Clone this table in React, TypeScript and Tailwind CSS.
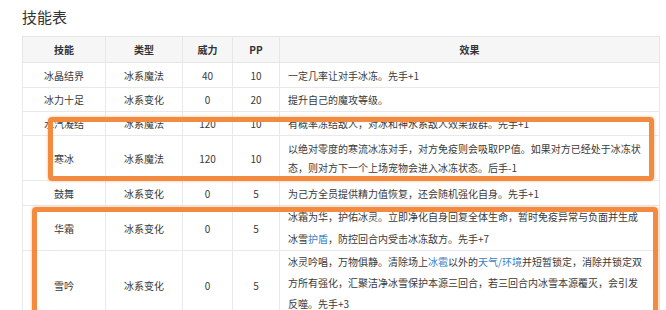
import React from 'react'

type Row = {
  name: string
  type: string
  power: string
  pp: string
  h: number
  lead?: string
  effect: React.ReactNode[]
}

const Link = ({ children }: { children: React.ReactNode }) => (
  <span className="text-[#3b7fc4]">{children}</span>
)

const rows: Row[] = [
  { name: '冰晶结界', type: '冰系魔法', power: '40', pp: '10', h: 25, effect: ['一定几率让对手冰冻。先手+1'] },
  { name: '冰力十足', type: '冰系变化', power: '0', pp: '20', h: 24, effect: ['提升自己的魔攻等级。'] },
  { name: '水汽凝结', type: '冰系魔法', power: '120', pp: '10', h: 24, effect: ['有概率冻结敌人，对冰和神水系敌人效果拔群。先手+1'] },
  {
    name: '寒冰', type: '冰系魔法', power: '120', pp: '10', h: 45, lead: 'leading-[19px]',
    effect: [
      '以绝对零度的寒流冰冻对手，对方免疫则会吸取PP值。如果对方已经处于冰冻状',
      '态，则对方下一个上场宠物会进入冰冻状态。后手-1',
    ],
  },
  { name: '鼓舞', type: '冰系变化', power: '0', pp: '5', h: 25, effect: ['为己方全员提供精力值恢复，还会随机强化自身。先手+1'] },
  {
    name: '华霜', type: '冰系变化', power: '0', pp: '5', h: 44, lead: 'leading-[22px]',
    effect: [
      '冰霜为华，护佑冰灵。立即净化自身回复全体生命，暂时免疫异常与负面并生成',
      <>冰雪<Link>护盾</Link>，防控回合内受击冰冻敌方。先手+7</>,
    ],
  },
  {
    name: '雪吟', type: '冰系变化', power: '0', pp: '5', h: 70, lead: 'leading-[21px]',
    effect: [
      <>冰灵吟唱，万物俱静。清除场上<Link>冰雹</Link>以外的<Link>天气/环境</Link>并短暂锁定，消除并锁定双</>,
      '方所有强化，汇聚洁净冰雪保护本源三回合，若三回合内冰雪本源覆灭，会引发',
      '反噬。先手+3',
    ],
  },
]

export default function App() {
  return (
    <div
      className="relative w-[666px] h-[310px] overflow-hidden bg-white text-[#3a3a3a]"
      style={{ fontFamily: '"Noto Sans CJK SC", "Noto Sans", sans-serif' }}
    >
      <div className="pl-[22px] pt-[6px]">
        <h2 className="text-[15px] leading-[22px] text-[#333]">技能表</h2>
        <table className="mt-[8px] w-[638px] table-fixed border-collapse text-[10px]">
          <colgroup>
            <col className="w-[83px]" />
            <col className="w-[77px]" />
            <col className="w-[50px]" />
            <col className="w-[47px]" />
            <col />
          </colgroup>
          <thead>
            <tr className="h-[26px] bg-[#f6f6f6]">
              {['技能', '类型', '威力', 'PP', '效果'].map((t) => (
                <th key={t} className="border border-[#e6e6e6] font-bold text-[#333] text-center">
                  {t}
                </th>
              ))}
            </tr>
          </thead>
          <tbody>
            {rows.map((r) => (
              <tr key={r.name} style={{ height: r.h }}>
                <td className="border border-[#e9e9e9] text-center">{r.name}</td>
                <td className="border border-[#e9e9e9] text-center">{r.type}</td>
                <td className="border border-[#e9e9e9] text-center">{r.power}</td>
                <td className="border border-[#e9e9e9] text-center">{r.pp}</td>
                <td className={`border border-[#e9e9e9] pl-[8px] ${r.lead ?? 'leading-[15px]'} ${r.name === '雪吟' ? 'align-top' : ''}`}>
                  {r.effect.map((line, i) => (
                    <div key={i} className="whitespace-nowrap">{line}</div>
                  ))}
                </td>
              </tr>
            ))}
          </tbody>
        </table>
      </div>

      {/* highlight boxes drawn over the table */}
      <div className="absolute left-[48px] top-[117px] w-[606px] h-[64px] rounded-[4px] border-[5px] border-[#f28b3f] shadow-[0_0_3px_rgba(242,139,63,0.6)]" />
      <div className="absolute left-[32px] top-[207px] w-[626px] h-[130px] rounded-[4px] border-[5px] border-[#f28b3f] shadow-[0_0_3px_rgba(242,139,63,0.6)]" />
    </div>
  )
}
